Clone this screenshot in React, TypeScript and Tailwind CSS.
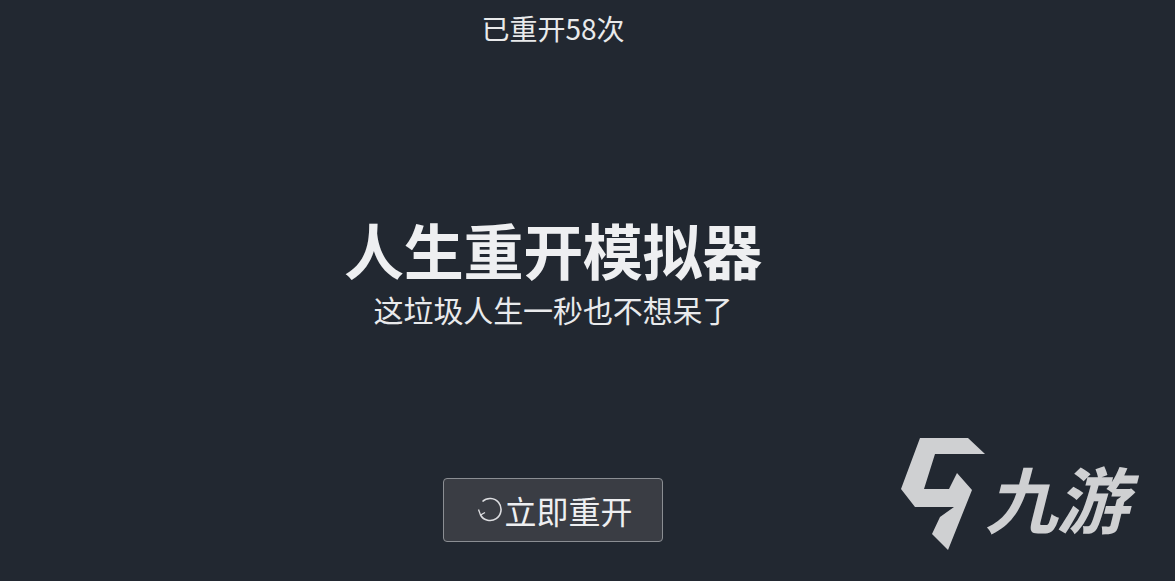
import React from 'react';

const cjk = "font-['Noto_Sans_CJK_SC','Noto_Sans',sans-serif]";

const JiuyouMark = () => (
  <svg viewBox="0 0 95 116" className="h-[116px] w-[95px] shrink-0" aria-hidden="true">
    <polygon
      fill="#cfd0d2"
      points="20,0 68,0 85,16 35,16 24,51 49,51 57,35 72,52 48,112 32,96 40,79 54,69 15,69 1,51"
    />
  </svg>
);

const RestartIcon = () => (
  <svg viewBox="0 0 28 28" className="h-[28px] w-[28px] shrink-0" fill="none" stroke="#dcdde0" aria-hidden="true">
    <path d="M6.5 5.5 A11 11 0 1 1 4.5 19" strokeWidth="1.6" />
    <path d="M2.5 13.5 L4.5 19 L9 16.5" strokeWidth="1.3" />
  </svg>
);

export default function App() {
  return (
    <div className={`relative h-[581px] w-[1175px] overflow-hidden bg-[#222831] ${cjk}`}>
      <div className="flex h-full w-[1106px] flex-col items-center">
        <div className="mt-[7px] h-[42px] text-[28px] leading-[42px] text-[#e9eaeb]">已重开58次</div>

        <h1 className="mt-[162px] h-[76px] text-[60px] font-bold leading-[76px] tracking-[-0.3px] text-[#eeeff1]">人生重开模拟器</h1>
        <p className="h-[44px] text-[30px] leading-[44px] tracking-[-0.1px] text-[#e9eaec]">这垃圾人生一秒也不想呆了</p>

        <button className="mt-[147px] flex h-[64px] w-[220px] items-center justify-center rounded-[4px] border border-[#8b8e93] bg-[#3a3d44] pl-[3px] text-[32px] leading-none text-[#eeeff1]">
          <RestartIcon />
          <span>立即重开</span>
        </button>
      </div>

      {/* watermark */}
      <div className="absolute left-[900px] top-[438px] flex items-start">
        <JiuyouMark />
        <span className="-ml-[2px] mt-[17px] -skew-x-[14deg] whitespace-nowrap text-[72px] font-bold leading-[84px] tracking-[-1px] text-[#cfd0d2]">
          九游
        </span>
      </div>
    </div>
  );
}
